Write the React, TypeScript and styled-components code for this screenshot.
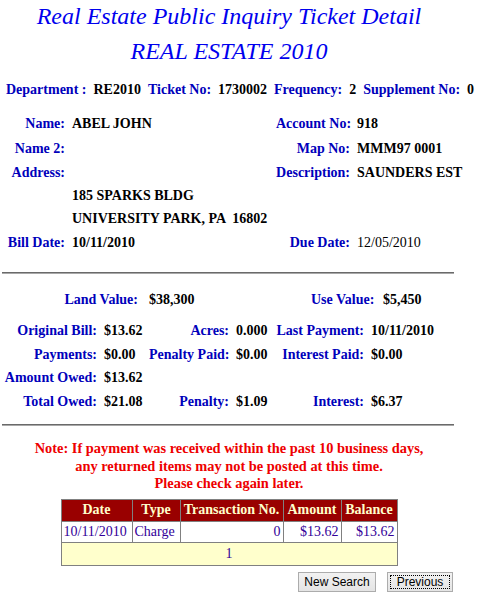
import styled, { createGlobalStyle } from "styled-components";

const GlobalStyle = createGlobalStyle`
  body {
    margin: 0;
    background: #ffffff;
    font-family: "Liberation Serif", "Times New Roman", serif;
  }
`;

const Page = styled.div`
  width: 458px;
  font-size: 14px;
  font-weight: bold;
`;

const Title = styled.div<{ $gap?: number }>`
  margin-top: ${(p) => p.$gap || 0}px;
  text-align: center;
  font-size: 24px;
  font-style: italic;
  font-weight: normal;
  line-height: 32px;
  color: #0000ee;
`;

const HeaderBar = styled.div`
  display: flex;
  gap: 7px;
  margin-top: 13px;
  padding-left: 6px;
  line-height: 20px;
  white-space: nowrap;
`;

const Label = styled.span`
  color: #0000bb;
  text-align: right;
  white-space: nowrap;
`;

const Value = styled.span<{ $regular?: boolean }>`
  color: #000000;
  font-weight: ${(p) => (p.$regular ? "normal" : "bold")};
  white-space: pre;
`;

const InfoGrid = styled.div`
  display: grid;
  grid-template-columns: 65px 197px 74px auto;
  grid-template-rows: 25px 25px 23px 23px 24px 24px;
  column-gap: 7px;
  align-items: center;
  line-height: 24px;
  margin-top: 11px;
`;

const Rule = styled.hr`
  margin: 0 0 0 2px;
  width: 452px;
  height: 0;
  border: none;
  border-top: 1px solid #6a6a6a;
  border-bottom: 1px solid #a8a8a8;
`;

const TopRule = styled(Rule)`
  margin-top: 17px;
`;

const BottomRule = styled(Rule)`
  margin-top: 11px;
`;

const ValueRow = styled.div`
  display: grid;
  grid-template-columns: 138px 151px 61px auto;
  column-gap: 11px;
  line-height: 24px;
  margin-top: 14px;
`;

const AmountGrid = styled.div`
  display: grid;
  grid-template-columns: 97px 38px 80px 32px 89px auto;
  grid-auto-rows: 23.5px;
  column-gap: 7px;
  align-items: center;
  line-height: 23.5px;
  margin-top: 7px;
`;

const Note = styled.div`
  margin-top: 14px;
  text-align: center;
  font-size: 14.4px;
  color: #ee0000;
  line-height: 17.5px;
`;

const TxTable = styled.table`
  margin: 6px auto 0;
  border-collapse: collapse;
  border: 1px solid #808080;
  font-size: 14px;
`;

const HeadCell = styled.th<{ $w: number }>`
  width: ${(p) => p.$w}px;
  height: 22px;
  padding: 0 2px;
  box-sizing: border-box;
  background: #990000;
  color: #ffffcc;
  border: 1px solid #808080;
  font-weight: bold;
  text-align: center;
  white-space: nowrap;
`;

const Cell = styled.td<{ $align?: string }>`
  height: 20px;
  padding: 0 2px;
  border: 1px solid #808080;
  color: #330099;
  font-weight: normal;
  text-align: ${(p) => p.$align || "left"};
  white-space: nowrap;
`;

const PagerCell = styled.td`
  height: 22px;
  padding: 0;
  border: 1px solid #808080;
  background: #ffffcc;
  color: #330099;
  font-weight: normal;
  text-align: center;
`;

const ButtonBar = styled.div`
  display: flex;
  justify-content: flex-end;
  gap: 11px;
  margin-top: 6px;
  padding-right: 5px;
`;

const Button = styled.button<{ $w: number; $focused?: boolean }>`
  width: ${(p) => p.$w}px;
  height: 20px;
  padding: 0;
  font-family: "Liberation Sans", Arial, sans-serif;
  font-size: 12px;
  font-weight: normal;
  color: #000000;
  background: linear-gradient(#f2f2f2, #e4e4e4);
  border: 1px solid #acacac;
  border-radius: 0;
  outline: ${(p) => (p.$focused ? "1px dotted #000000" : "none")};
  outline-offset: -4px;
`;

const transactions = [
  { date: "10/11/2010", type: "Charge", no: "0", amount: "$13.62", balance: "$13.62" },
];

export default function App() {
  return (
    <Page>
      <GlobalStyle />
      <Title>Real Estate Public Inquiry Ticket Detail</Title>
      <Title $gap={3}>REAL ESTATE 2010</Title>

      <HeaderBar>
        <Label>Department :</Label>
        <Value>RE2010</Value>
        <Label>Ticket No:</Label>
        <Value>1730002</Value>
        <Label>Frequency:</Label>
        <Value>2</Value>
        <Label>Supplement No:</Label>
        <Value>0</Value>
      </HeaderBar>

      <InfoGrid>
        <Label>Name:</Label>
        <Value>ABEL JOHN</Value>
        <Label>Account No:</Label>
        <Value>918</Value>

        <Label>Name 2:</Label>
        <Value></Value>
        <Label>Map No:</Label>
        <Value>MMM97 0001</Value>

        <Label>Address:</Label>
        <Value></Value>
        <Label>Description:</Label>
        <Value>SAUNDERS EST</Value>

        <span />
        <Value>185 SPARKS BLDG</Value>
        <span />
        <span />

        <span />
        <Value>UNIVERSITY PARK, PA  16802</Value>
        <span />
        <span />

        <Label>Bill Date:</Label>
        <Value>10/11/2010</Value>
        <Label>Due Date:</Label>
        <Value $regular>12/05/2010</Value>
      </InfoGrid>

      <TopRule />

      <ValueRow>
        <Label>Land Value:</Label>
        <Value>$38,300</Value>
        <Label>Use Value:</Label>
        <Value>$5,450</Value>
      </ValueRow>

      <AmountGrid>
        <Label>Original Bill:</Label>
        <Value>$13.62</Value>
        <Label>Acres:</Label>
        <Value>0.000</Value>
        <Label>Last Payment:</Label>
        <Value>10/11/2010</Value>

        <Label>Payments:</Label>
        <Value>$0.00</Value>
        <Label>Penalty Paid:</Label>
        <Value>$0.00</Value>
        <Label>Interest Paid:</Label>
        <Value>$0.00</Value>

        <Label>Amount Owed:</Label>
        <Value>$13.62</Value>
        <span />
        <span />
        <span />
        <span />

        <Label>Total Owed:</Label>
        <Value>$21.08</Value>
        <Label>Penalty:</Label>
        <Value>$1.09</Value>
        <Label>Interest:</Label>
        <Value>$6.37</Value>
      </AmountGrid>

      <BottomRule />

      <Note>
        Note: If payment was received within the past 10 business days,
        <br />
        any returned items may not be posted at this time.
        <br />
        Please check again later.
      </Note>

      <TxTable>
        <thead>
          <tr>
            <HeadCell $w={71}>Date</HeadCell>
            <HeadCell $w={48}>Type</HeadCell>
            <HeadCell $w={103}>Transaction No.</HeadCell>
            <HeadCell $w={58}>Amount</HeadCell>
            <HeadCell $w={56}>Balance</HeadCell>
          </tr>
        </thead>
        <tbody>
          {transactions.map((t) => (
            <tr key={t.date + t.no}>
              <Cell>{t.date}</Cell>
              <Cell>{t.type}</Cell>
              <Cell $align="right">{t.no}</Cell>
              <Cell $align="right">{t.amount}</Cell>
              <Cell $align="right">{t.balance}</Cell>
            </tr>
          ))}
          <tr>
            <PagerCell colSpan={5}>1</PagerCell>
          </tr>
        </tbody>
      </TxTable>

      <ButtonBar>
        <Button $w={78}>New Search</Button>
        <Button $w={66} $focused>
          Previous
        </Button>
      </ButtonBar>
    </Page>
  );
}
